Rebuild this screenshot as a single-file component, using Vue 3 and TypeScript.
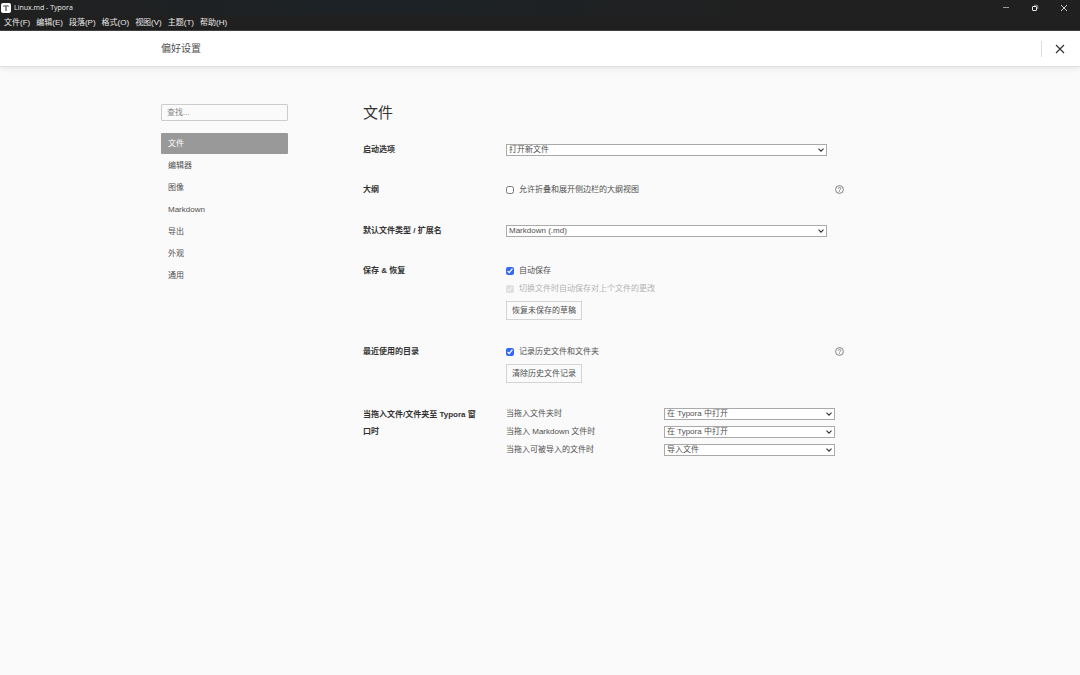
<script setup lang="ts">
import { ref } from 'vue'

interface DropRule {
  id: string
  label: string
  value: string
  options: string[]
}

const menus = ['文件(F)', '编辑(E)', '段落(P)', '格式(O)', '视图(V)', '主题(T)', '帮助(H)']
const sections = ['文件', '编辑器', '图像', 'Markdown', '导出', '外观', '通用']

const active = ref('文件')
const query = ref('')
const startup = ref('打开新文件')
const fileType = ref('Markdown (.md)')
const collapsible = ref(false)
const autoSave = ref(true)
const saveOnSwitch = ref(true)
const keepHistory = ref(true)

const dropRules = ref<DropRule[]>([
  { id: 'drop-folder', label: '当拖入文件夹时', value: '在 Typora 中打开', options: ['在 Typora 中打开'] },
  { id: 'drop-md', label: '当拖入 Markdown 文件时', value: '在 Typora 中打开', options: ['在 Typora 中打开', '导入文件'] },
  { id: 'drop-import', label: '当拖入可被导入的文件时', value: '导入文件', options: ['导入文件', '在 Typora 中打开'] },
])
</script>

<template>
  <div class="window">
    <header class="chrome">
      <div class="titlebar">
        <svg class="logo" viewBox="0 0 20 20" aria-hidden="true">
          <rect width="20" height="20" rx="4" fill="#fff" />
          <path d="M5 5h10v3h-1l-.6-1.500h-2.300v7.300l1.500.5v.9H7.400v-.9l1.500-.5V6.500H6.600L6 8H5z" fill="#333" />
        </svg>
        <span class="title">Linux.md - Typora</span>
        <div class="controls">
          <button type="button" aria-label="最小化">
            <svg viewBox="0 0 8 8"><path d="M1 3.500h6" stroke="#999" /></svg>
          </button>
          <button type="button" aria-label="还原">
            <svg viewBox="0 0 8 8" fill="none" stroke="#e6e6e6">
              <rect x="1.500" y="2.500" width="4" height="4" rx=".4" />
              <path d="M3 1.300h3q.8 0 .8.8v3" stroke="#aaa" stroke-width=".8" />
            </svg>
          </button>
          <button type="button" aria-label="关闭窗口">
            <svg viewBox="0 0 8 8"><path d="M1 1l6 6M7 1L1 7" stroke="#e0e0e0" stroke-width=".9" /></svg>
          </button>
        </div>
      </div>
      <nav class="menubar" aria-label="菜单">
        <button v-for="menu in menus" :key="menu" type="button">{{ menu }}</button>
      </nav>
    </header>

    <div class="topbar">
      <h1>偏好设置</h1>
      <div class="dismiss">
        <button type="button" aria-label="关闭">
          <svg viewBox="0 0 10 10"><path d="M1 1l8 8M9 1L1 9" stroke="#333" stroke-width="1.200" /></svg>
        </button>
      </div>
    </div>

    <main class="page">
      <aside class="sidebar">
        <input v-model="query" class="search" type="search" placeholder="查找..." aria-label="查找" />
        <nav class="sections" aria-label="设置分类">
          <a
            v-for="section in sections"
            :key="section"
            href="#"
            :class="{ active: section === active }"
            @click.prevent="active = section"
          >{{ section }}</a>
        </nav>
      </aside>

      <section class="panel">
        <h2>文件</h2>

        <div class="row">
          <label class="name" for="startup">启动选项</label>
          <div class="field">
            <span class="select wide">
              <select id="startup" v-model="startup">
                <option>打开新文件</option>
              </select>
              <svg viewBox="0 0 8 8"><path d="M1.500 2.700L4 5.200l2.500-2.500" /></svg>
            </span>
          </div>
        </div>

        <div class="row">
          <h3 class="name">大纲</h3>
          <div class="field">
            <label class="check"><input v-model="collapsible" type="checkbox" />允许折叠和展开侧边栏的大纲视图</label>
          </div>
          <button type="button" class="help" aria-label="大纲说明">
            <svg viewBox="0 0 18 18">
              <circle cx="9" cy="9" r="7.800" />
              <path d="M6.600 7.200c0-3.300 4.900-3.100 4.900-.2 0 1.800-2.500 1.900-2.500 4M9 12.400v1.500" />
            </svg>
          </button>
        </div>

        <div class="row">
          <label class="name" for="file-type">默认文件类型 / 扩展名</label>
          <div class="field">
            <span class="select wide">
              <select id="file-type" v-model="fileType">
                <option>Markdown (.md)</option>
              </select>
              <svg viewBox="0 0 8 8"><path d="M1.500 2.700L4 5.200l2.500-2.500" /></svg>
            </span>
          </div>
        </div>

        <div class="row">
          <h3 class="name">保存 &amp; 恢复</h3>
          <div class="field">
            <label class="check"><input v-model="autoSave" type="checkbox" />自动保存</label>
            <label class="check muted"><input v-model="saveOnSwitch" type="checkbox" disabled />切换文件时自动保存对上个文件的更改</label>
            <button type="button" class="action">恢复未保存的草稿</button>
          </div>
        </div>

        <div class="row">
          <h3 class="name">最近使用的目录</h3>
          <div class="field">
            <label class="check"><input v-model="keepHistory" type="checkbox" />记录历史文件和文件夹</label>
            <button type="button" class="action">清除历史文件记录</button>
          </div>
          <button type="button" class="help" aria-label="最近使用的目录说明">
            <svg viewBox="0 0 18 18">
              <circle cx="9" cy="9" r="7.800" />
              <path d="M6.600 7.200c0-3.300 4.900-3.100 4.900-.2 0 1.800-2.500 1.900-2.500 4M9 12.400v1.500" />
            </svg>
          </button>
        </div>

        <div class="row">
          <h3 class="name">当拖入文件/文件夹至 Typora 窗口时</h3>
          <div class="rules">
            <div v-for="rule in dropRules" :key="rule.id" class="rule">
              <label :for="rule.id">{{ rule.label }}</label>
              <span class="select">
                <select :id="rule.id" v-model="rule.value">
                  <option v-for="option in rule.options" :key="option">{{ option }}</option>
                </select>
                <svg viewBox="0 0 8 8"><path d="M1.500 2.700L4 5.200l2.500-2.500" /></svg>
              </span>
            </div>
          </div>
        </div>
      </section>
    </main>
  </div>
</template>

<style>
body {
  margin: 0;
  background: #fafafa;
}
</style>

<style scoped>
.window {
  min-height: 100vh;
  background: #fafafa;
  color: #505050;
  font: 8px/16px "Liberation Sans", "Noto Sans CJK SC", sans-serif;
}
.window * {
  box-sizing: border-box;
}
button,
input,
select {
  margin: 0;
  font: inherit;
  color: inherit;
}
button {
  padding: 0;
  border: 0;
  background: none;
}
svg {
  display: block;
}
h1,
h2,
h3 {
  margin: 0;
}

.chrome {
  background: linear-gradient(90deg, #202020, #1c2226 35%, #202020 70%);
  border-bottom: 1px solid #444;
  color: #e8e8e8;
  font-family: "Open Sans", "Noto Sans CJK SC", sans-serif;
}
.titlebar {
  display: flex;
  align-items: center;
  height: 15px;
  padding: 0 12px 0 1px;
  font-size: 7px;
}
.logo {
  width: 10px;
  height: 10px;
  margin-right: 3px;
}
.controls {
  display: flex;
  gap: 21px;
  margin-left: auto;
}
.controls svg {
  width: 8px;
  height: 8px;
}
.menubar {
  display: flex;
  gap: 6px;
  height: 15px;
  padding-left: 4px;
  background: #202020;
  font-family: "Liberation Sans", "Noto Sans CJK SC", sans-serif;
  line-height: 16px;
}

.topbar {
  position: relative;
  padding: 0 15% 0 calc(15% - 1px);
  background: #fff;
  border-bottom: 1px solid #e0e0e0;
  box-shadow: 0 1px 6px rgba(0, 0, 0, 0.1);
}
.topbar h1 {
  font-size: 10px;
  font-weight: 400;
  line-height: 35px;
}
.dismiss {
  position: absolute;
  top: 0;
  right: 0;
  bottom: 0;
  display: flex;
  align-items: center;
}
.dismiss button {
  padding: 3px 15px 3px 13px;
  border-left: 1px solid #ddd;
}
.dismiss svg {
  width: 10px;
  height: 10px;
}

.page {
  display: grid;
  grid-template-columns: 127px minmax(0, 488px);
  column-gap: 75px;
  padding: 37px 15% 32px calc(15% - 1px);
}
.search {
  display: block;
  width: 100%;
  height: 17px;
  padding: 0 5px;
  border: 1px solid #ccc;
  border-radius: 1px;
  background: #fafafa;
  outline: 0;
  appearance: none;
}
.search::placeholder {
  color: #858585;
}
.sections {
  display: grid;
  row-gap: 1px;
  margin-top: 12px;
}
.sections a {
  padding: 0 7px;
  border-radius: 1px;
  color: #505050;
  line-height: 21px;
  text-decoration: none;
}
.sections a.active {
  background: #999;
  color: #fff;
}

.panel h2 {
  margin-bottom: 19px;
  color: #333;
  font-size: 15px;
  font-weight: 400;
  line-height: 18px;
}
.row {
  display: grid;
  grid-template-columns: 119px 321px 10px;
  column-gap: 24px;
  margin-bottom: 23px;
}
.row > .help {
  margin-left: -16px;
}
.name {
  color: #333;
  font-size: 8px;
  font-weight: 700;
  line-height: 17px;
}
.field {
  display: flex;
  flex-direction: column;
  align-items: flex-start;
}
.select {
  position: relative;
  display: block;
  width: 171px;
  height: 12px;
}
.select.wide {
  width: 100%;
  margin-top: 3px;
}
.select select {
  display: block;
  width: 100%;
  height: 100%;
  padding: 0 14px 0 2px;
  border: 1px solid #aaa;
  border-radius: 0;
  background: #fff;
  line-height: 10px;
  appearance: none;
}
.select svg {
  position: absolute;
  top: 2px;
  right: 2px;
  width: 8px;
  height: 8px;
  fill: none;
  stroke: #333;
  stroke-width: 1.1;
  pointer-events: none;
}
.check {
  display: flex;
  align-items: center;
  gap: 5px;
  line-height: 18px;
}
.check input {
  width: 8px;
  height: 8px;
  accent-color: #3569f5;
}
.check.muted {
  color: #b4b4b4;
}
.check.muted input {
  opacity: 0.6;
}
.action {
  height: 19px;
  margin-top: 3px;
  padding: 0 5px;
  border: 1px solid #d4d4d4;
  line-height: 17px;
}
.help {
  align-self: start;
  padding: 4px 0;
}
.help svg {
  width: 9px;
  height: 9px;
  fill: none;
  stroke: #666;
  stroke-width: 1.6;
}
.rules {
  display: grid;
  row-gap: 6px;
  padding-top: 2px;
}
.rule {
  display: grid;
  grid-template-columns: 158px 171px;
  line-height: 12px;
}
</style>
